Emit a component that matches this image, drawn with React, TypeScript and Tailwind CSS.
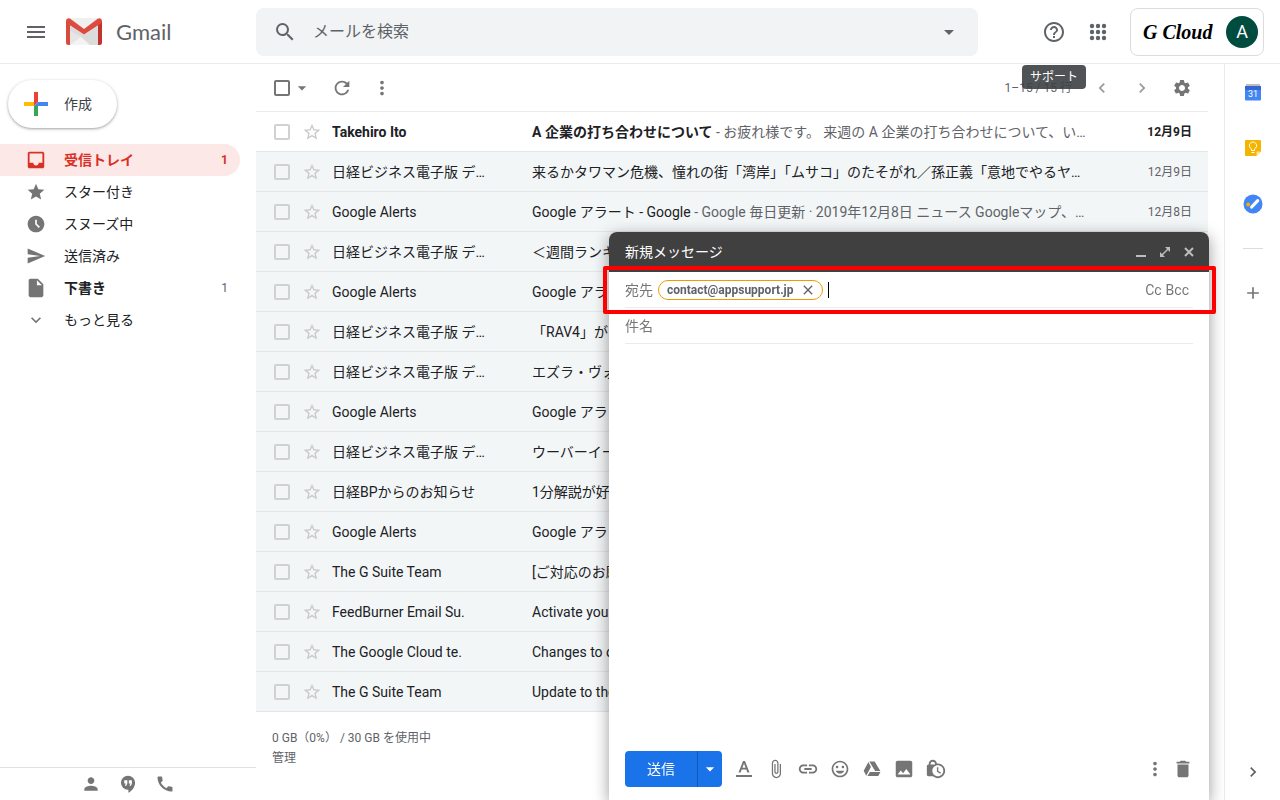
import type { ReactNode } from "react";
import {
  MdAccessTimeFilled,
  MdAdd,
  MdArrowDropDown,
  MdAttachFile,
  MdCall,
  MdChevronLeft,
  MdChevronRight,
  MdClose,
  MdDelete,
  MdExpandMore,
  MdHelpOutline,
  MdInbox,
  MdInsertDriveFile,
  MdInsertLink,
  MdLockClock,
  MdMenu,
  MdMoreVert,
  MdOutlineInsertEmoticon,
  MdPerson,
  MdPhoto,
  MdRefresh,
  MdSearch,
  MdSend,
  MdSettings,
  MdStar,
  MdStarBorder,
} from "react-icons/md";

const folders = [
  { label: "受信トレイ", icon: MdInbox, size: 22, count: 1, active: true },
  { label: "スター付き", icon: MdStar, size: 20 },
  { label: "スヌーズ中", icon: MdAccessTimeFilled, size: 20 },
  { label: "送信済み", icon: MdSend, size: 20 },
  { label: "下書き", icon: MdInsertDriveFile, size: 22, count: 1, bold: true },
  { label: "もっと見る", icon: MdExpandMore, size: 20 },
];

const mails = [
  {
    from: "Takehiro Ito",
    subject: "A 企業の打ち合わせについて",
    snippet: "お疲れ様です。 来週の A 企業の打ち合わせについて、い…",
    date: "12月9日",
    unread: true,
  },
  {
    from: "日経ビジネス電子版 デ…",
    subject: "来るかタワマン危機、憧れの街「湾岸」「ムサコ」のたそがれ／孫正義「意地でやるヤ…",
    date: "12月9日",
  },
  {
    from: "Google Alerts",
    subject: "Google アラート - Google",
    snippet: "Google 毎日更新 · 2019年12月8日 ニュース Googleマップ、…",
    date: "12月8日",
  },
  { from: "日経ビジネス電子版 デ…", subject: "＜週間ランキング＞" },
  { from: "Google Alerts", subject: "Google アラート" },
  { from: "日経ビジネス電子版 デ…", subject: "「RAV4」が" },
  { from: "日経ビジネス電子版 デ…", subject: "エズラ・ヴォーゲル" },
  { from: "Google Alerts", subject: "Google アラート" },
  { from: "日経ビジネス電子版 デ…", subject: "ウーバーイーツ" },
  { from: "日経BPからのお知らせ", subject: "1分解説が好評" },
  { from: "Google Alerts", subject: "Google アラート" },
  { from: "The G Suite Team", subject: "[ご対応のお願い]" },
  { from: "FeedBurner Email Su.", subject: "Activate your" },
  { from: "The Google Cloud te.", subject: "Changes to our" },
  { from: "The G Suite Team", subject: "Update to the" },
];

const IconButton = ({ label, className = "", children }: { label: string; className?: string; children: ReactNode }) => (
  <button type="button" aria-label={label} className={`flex shrink-0 items-center justify-center ${className}`}>
    {children}
  </button>
);

const GmailLogo = () => (
  <svg width="36" height="27" viewBox="0 0 36 27" aria-hidden="true">
    <path d="M3 0h30v27H3z" fill="#f0f0f0" />
    <path d="M4 7 18 17 32 7v20H21L4 13z" fill="#dcdcdc" />
    <path d="M4 27V13l12 6z" fill="#e6e6e6" />
    <path d="m4 27 11-8 9 8z" fill="#f4f4f4" />
    <path d="M0 3v21.500A2.500 2.500 0 0 0 2.500 27H4V5z" fill="#d54b3d" />
    <path d="M36 3v21.500a2.500 2.500 0 0 1-2.500 2.500H32V5z" fill="#c0352b" />
    <path d="M0 3C0 .5 2.500-.6 4.300.8L18 11 31.700.8C33.500-.6 36 .5 36 3c0 1-.5 1.900-1.300 2.500L18 16.500 1.300 5.500C.5 4.900 0 4 0 3z" fill="#dd4b3e" />
  </svg>
);

const PlusLogo = () => (
  <svg width="24" height="24" viewBox="0 0 24 24" aria-hidden="true">
    <path d="M10 0h4v10l-4 4z" fill="#ea4335" />
    <path d="M0 10h10v4H0z" fill="#fbbc04" />
    <path d="M10 14h4v10h-4z" fill="#34a853" />
    <path d="M14 10h10v4H10z" fill="#4285f4" />
  </svg>
);

const AppsIcon = () => (
  <svg width="24" height="24" viewBox="0 0 24 24" fill="currentColor" aria-hidden="true">
    {[6, 12, 18].map((y) => [6, 12, 18].map((x) => <circle key={`${x}-${y}`} cx={x} cy={y} r="2.200" />))}
  </svg>
);

const HangoutsIcon = () => (
  <svg width="20" height="20" viewBox="0 0 24 24" fill="currentColor" aria-hidden="true">
    <path d="M12 2a8.500 8.500 0 0 0 0 17h.5v3.500c4.800-2.400 8-7.500 8-12A8.500 8.500 0 0 0 12 2zm-.8 9.500L10 14H8.200l1.200-2.500H7.500V7.500h3.700zm5.500 0L15.500 14h-1.800l1.200-2.500H13V7.500h3.700z" />
  </svg>
);

const DriveIcon = () => (
  <svg width="20" height="20" viewBox="0 0 24 24" fill="currentColor" aria-hidden="true">
    <path d="M7.700 3.500 2 14.200 5 20l5.700-10.500z" />
    <path d="M8.800 3h6.400l6.800 11.300h-6.300z" />
    <path d="M9.500 15.500h12.600L19.500 20.500H6.500z" />
  </svg>
);

const CalendarIcon = () => (
  <svg width="16" height="18" viewBox="0 0 16 18" aria-hidden="true">
    <path d="M1 1h14v3H1z" fill="#bdbdbd" />
    <path d="M0 3h16v13.500a1 1 0 0 1-1 1H1a1 1 0 0 1-1-1z" fill="#4285f4" />
    <path d="M0 3h16v4H0z" fill="#3367d6" />
    <text x="8" y="14" textAnchor="middle" fontSize="9" fontFamily="Roboto, sans-serif" fill="#fff">31</text>
  </svg>
);

const KeepIcon = () => (
  <svg width="16" height="16" viewBox="0 0 16 16" aria-hidden="true">
    <path d="M1 0h14a1 1 0 0 1 1 1v10.500L11.500 16H1a1 1 0 0 1-1-1V1a1 1 0 0 1 1-1z" fill="#f4b400" />
    <path d="M16 11.500 11.500 16v-4.500z" fill="#fde293" />
    <path d="M6.500 10.500V8.900a3.600 3.600 0 1 1 3 0v1.600zM6.500 12.500h3" fill="none" stroke="#fff" />
  </svg>
);

const TasksIcon = () => (
  <svg width="20" height="20" viewBox="0 0 20 20" aria-hidden="true">
    <circle cx="10" cy="10" r="9.500" fill="#4285f4" />
    <circle cx="5.200" cy="10.500" r="2" fill="#f9ab00" />
    <path d="m8.700 13 6-6.300" stroke="#fff" strokeWidth="3.200" strokeLinecap="round" />
  </svg>
);

const Header = () => (
  <header className="flex h-16 shrink-0 items-center border-b border-[#ebebeb] pr-4">
    <div className="flex w-64 shrink-0 items-center pl-6">
      <IconButton label="メインメニュー">
        <MdMenu size={24} />
      </IconButton>
      <a href="#inbox" className="ml-[18px] flex items-center gap-3.5 font-['Lato','Noto_Sans_CJK_JP',sans-serif] text-[22px] leading-7">
        <GmailLogo />
        Gmail
      </a>
    </div>
    <form className="flex h-12 max-w-[722px] flex-1 items-center rounded-lg bg-[#f1f3f4] px-[17px]">
      <IconButton label="検索">
        <MdSearch size={24} />
      </IconButton>
      <input
        type="search"
        aria-label="メールを検索"
        placeholder="メールを検索"
        className="ml-4 min-w-0 flex-1 bg-transparent text-base outline-none placeholder:text-[#5f6368]"
      />
      <IconButton label="検索オプション">
        <MdArrowDropDown size={24} />
      </IconButton>
    </form>
    <div className="ml-auto flex items-center">
      <div className="relative">
        <IconButton label="サポート">
          <MdHelpOutline size={24} />
        </IconButton>
        <span
          role="tooltip"
          className="absolute top-[45px] left-1/2 z-10 -translate-x-1/2 rounded bg-[#3c4043]/90 px-2 text-xs leading-6 whitespace-nowrap text-white"
        >
          サポート
        </span>
      </div>
      <IconButton label="Google アプリ" className="ml-5">
        <AppsIcon />
      </IconButton>
      <div className="ml-5 flex h-12 w-[134px] items-center justify-between rounded-lg border border-[#dadce0] pr-[5px] pl-3">
        <span className="font-['Liberation_Serif',serif] text-xl font-bold text-black italic">G Cloud</span>
        <button type="button" className="size-8 rounded-full bg-[#004d40] text-lg text-white">
          A
        </button>
      </div>
    </div>
  </header>
);

const Sidebar = () => (
  <aside className="flex w-64 shrink-0 flex-col">
    <button
      type="button"
      className="mt-4 ml-2 flex h-12 w-[109px] items-center gap-4 rounded-full bg-white pl-4 text-sm text-[#3c4043] shadow-[0_1px_2px_rgba(60,64,67,0.3),0_1px_3px_1px_rgba(60,64,67,0.15)]"
    >
      <PlusLogo />
      作成
    </button>
    <nav className="mt-4 mr-4">
      {folders.map(({ label, icon: Icon, size, count, active, bold }) => (
        <a
          key={label}
          href="#folder"
          className={`flex h-8 items-center rounded-r-full pr-3 pl-[26px] text-sm ${
            active ? "bg-[#fce8e6] font-bold text-[#d93025]" : "text-[#202124]"
          } ${bold ? "font-bold" : ""}`}
        >
          <span className={`flex size-5 items-center justify-center ${active ? "" : "text-[#757575]"}`}>
            <Icon size={size} className="shrink-0" />
          </span>
          <span className="ml-[18px] flex-1">{label}</span>
          {count && <span className={`text-xs ${active ? "" : "font-normal text-[#5f6368]"}`}>{count}</span>}
        </a>
      ))}
    </nav>
    <div className="mt-auto flex h-[33px] items-center justify-center gap-[17px] border-t border-[#e0e0e0] text-[#757575]">
      <IconButton label="連絡先">
        <MdPerson size={20} />
      </IconButton>
      <IconButton label="ハングアウト">
        <HangoutsIcon />
      </IconButton>
      <IconButton label="電話">
        <MdCall size={20} />
      </IconButton>
    </div>
  </aside>
);

const Toolbar = () => (
  <div className="flex h-12 items-center border-b border-[#ebebeb] pr-4 pl-[18px] text-[#757575]">
    <input type="checkbox" aria-label="すべて選択" className="size-4 appearance-none rounded-xs border-2 border-[#757575]" />
    <IconButton label="選択">
      <MdArrowDropDown size={20} className="ml-0.5" />
    </IconButton>
    <IconButton label="更新" className="ml-5 size-5">
      <MdRefresh size={22} className="shrink-0" />
    </IconButton>
    <IconButton label="その他" className="ml-5 size-5">
      <MdMoreVert size={22} className="shrink-0" />
    </IconButton>
    <span className="ml-auto text-xs text-[#5f6368]">1–15 / 15 行</span>
    <IconButton label="前" className="ml-5 text-[#999]">
      <MdChevronLeft size={20} />
    </IconButton>
    <IconButton label="次" className="ml-5 text-[#999]">
      <MdChevronRight size={20} />
    </IconButton>
    <IconButton label="設定" className="ml-5">
      <MdSettings size={20} />
    </IconButton>
  </div>
);

const MailList = () => (
  <main className="mr-4 min-w-0 flex-1">
    <Toolbar />
    <table className="w-full table-fixed border-separate border-spacing-0 text-sm">
      <colgroup>
        <col className="w-[76px]" />
        <col className="w-[200px]" />
        <col />
        <col className="w-28" />
      </colgroup>
      <tbody>
        {mails.map((mail, i) => (
          <tr
            key={i}
            className={`h-10 [&>td]:border-b [&>td]:border-[#e3e7e8] [&>td]:p-0 ${mail.unread ? "bg-white font-bold" : "bg-[#f3f6f7]"}`}
          >
            <td>
              <div className="flex items-center gap-3 pl-[18px]">
                <input
                  type="checkbox"
                  aria-label={mail.from}
                  className="size-4 appearance-none rounded-xs border-2 border-[#cfd1d2]"
                />
                <IconButton label="スター" className="text-[#c8cacb]">
                  <MdStarBorder size={20} />
                </IconButton>
              </div>
            </td>
            <td className="truncate">{mail.from}</td>
            <td className="overflow-hidden whitespace-nowrap">
              {mail.subject}
              {mail.snippet && <span className="font-normal text-[#5f6368]"> - {mail.snippet}</span>}
            </td>
            <td>
              <div className={`pr-4 text-right text-xs ${mail.unread ? "" : "text-[#5f6368]"}`}>{mail.date}</div>
            </td>
          </tr>
        ))}
      </tbody>
    </table>
    <footer className="px-4 pt-4 text-xs leading-5 text-[#5f6368]">
      <p>0 GB（0%） / 30 GB を使用中</p>
      <a href="#storage">管理</a>
    </footer>
  </main>
);

const AppRail = () => (
  <aside className="flex w-14 shrink-0 flex-col items-center border-l border-[#ebebeb] py-[18px]">
    <IconButton label="カレンダー" className="h-5">
      <CalendarIcon />
    </IconButton>
    <IconButton label="Keep" className="mt-9 h-5">
      <KeepIcon />
    </IconButton>
    <IconButton label="ToDo リスト" className="mt-9 h-5">
      <TasksIcon />
    </IconButton>
    <hr className="mt-[34px] w-5 border-[#dadce0]" />
    <IconButton label="アドオンを取得" className="mt-[34px] text-[#757575]">
      <MdAdd size={20} />
    </IconButton>
    <IconButton label="サイドパネルを非表示" className="mt-auto text-[#5f6368]">
      <MdChevronRight size={20} />
    </IconButton>
  </aside>
);

const Compose = () => (
  <section className="fixed right-[71px] bottom-0 flex h-[568px] w-[600px] flex-col rounded-t-lg bg-white shadow-[0_4px_16px_rgba(0,0,0,0.4)]">
    <div className="flex h-10 items-center rounded-t-lg bg-[#404040] pr-3 pl-4 text-sm text-white">
      <h2 className="flex-1">新規メッセージ</h2>
      <div className="flex gap-2 text-[#bdbdbd]">
        <IconButton label="最小化" className="size-4">
          <svg width="16" height="16" viewBox="0 0 16 16" aria-hidden="true">
            <path d="M3 11h10v2H3z" fill="currentColor" />
          </svg>
        </IconButton>
        <IconButton label="全画面表示" className="size-4">
          <svg width="16" height="16" viewBox="0 0 16 16" aria-hidden="true">
            <path d="M8 3h5v5zM3 8v5h5z" fill="currentColor" />
            <path d="m4 12 8-8" stroke="currentColor" strokeWidth="1.500" />
          </svg>
        </IconButton>
        <IconButton label="閉じる" className="size-4">
          <svg width="16" height="16" viewBox="0 0 16 16" aria-hidden="true">
            <path d="m4 4 8 8M12 4l-8 8" stroke="currentColor" strokeWidth="2" />
          </svg>
        </IconButton>
      </div>
    </div>
    <div className="relative">
      <div className="mx-4 flex h-9 items-center border-b border-[#ebebeb] text-sm text-[#777]">
        <label htmlFor="to">宛先</label>
        <span className="ml-[5px] flex h-5 items-center gap-1.5 rounded-full border border-[#f29900] pr-1.5 pl-2 text-xs font-bold text-[#5f6368]">
          contact@appsupport.jp
          <IconButton label="削除">
            <MdClose size={16} />
          </IconButton>
        </span>
        <span className="ml-[5px] h-4 w-px bg-black" />
        <input id="to" className="min-w-0 flex-1 outline-none" />
        <button type="button">Cc</button>
        <button type="button" className="mx-1">
          Bcc
        </button>
      </div>
      <div className="pointer-events-none absolute -inset-y-1.5 -right-[7px] -left-1.5 rounded-xs border-4 border-[#ff0000]" />
    </div>
    <input
      aria-label="件名"
      placeholder="件名"
      className="mx-4 h-9 border-b border-[#ebebeb] text-sm outline-none placeholder:text-[#777]"
    />
    <textarea aria-label="本文" className="mx-4 flex-1 resize-none outline-none" />
    <div className="flex h-[62px] items-center px-4 text-[#757575]">
      <div className="flex h-9 w-[97px] overflow-hidden rounded bg-[#1a73e8] text-sm text-white">
        <button type="button" className="w-[72px]">
          送信
        </button>
        <IconButton label="送信オプション" className="flex-1 border-l border-[#1557b0]">
          <MdArrowDropDown size={20} />
        </IconButton>
      </div>
      <div className="ml-3 flex gap-3">
        <IconButton label="書式設定オプション" className="size-5">
          <svg width="20" height="20" viewBox="0 0 20 20" fill="currentColor" aria-hidden="true">
            <path d="M2 16h16v2H2z" />
            <path d="M9 2h2l4.500 11.500h-2.100l-1.100-3H7.700l-1.100 3H4.500zm1 2.500L8.400 8.800h3.200z" />
          </svg>
        </IconButton>
        <IconButton label="ファイルを添付" className="size-5">
          <MdAttachFile size={20} />
        </IconButton>
        <IconButton label="リンクを挿入" className="size-5">
          <MdInsertLink size={22} className="shrink-0" />
        </IconButton>
        <IconButton label="絵文字を挿入" className="size-5">
          <MdOutlineInsertEmoticon size={20} />
        </IconButton>
        <IconButton label="ドライブを使用してファイルを挿入" className="size-5">
          <DriveIcon />
        </IconButton>
        <IconButton label="写真を挿入" className="size-5">
          <MdPhoto size={22} className="shrink-0" />
        </IconButton>
        <IconButton label="情報保護モード" className="size-5">
          <MdLockClock size={22} className="shrink-0" />
        </IconButton>
      </div>
      <IconButton label="その他のオプション" className="ml-auto size-5">
        <MdMoreVert size={22} className="shrink-0" />
      </IconButton>
      <IconButton label="下書きを破棄" className="ml-2 size-5">
        <MdDelete size={22} className="shrink-0" />
      </IconButton>
    </div>
  </section>
);

const App = () => {
  return (
    <div className="flex h-screen flex-col overflow-hidden bg-white font-['Roboto','Noto_Sans_CJK_JP',sans-serif] text-[#5f6368]">
      <Header />
      <div className="flex min-h-0 flex-1 text-[#202124]">
        <Sidebar />
        <MailList />
        <AppRail />
      </div>
      <Compose />
    </div>
  );
};

export default App;
